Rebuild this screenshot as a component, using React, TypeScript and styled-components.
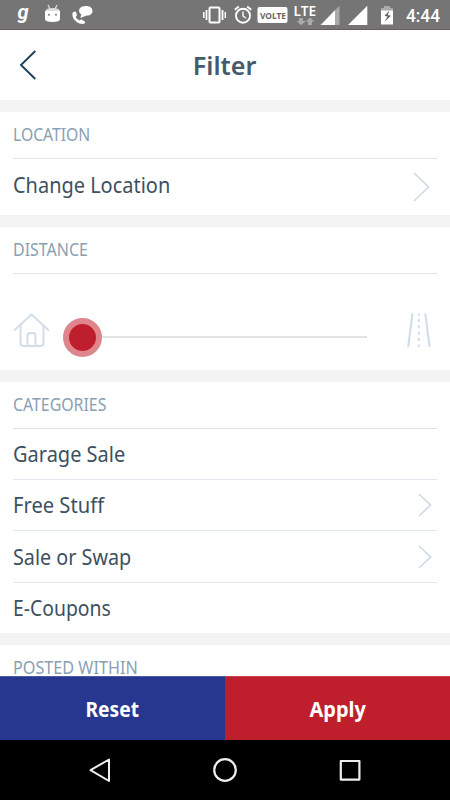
import styled, { createGlobalStyle } from 'styled-components'

const GlobalStyle = createGlobalStyle`
  * {
    box-sizing: border-box;
  }

  body {
    margin: 0;
    background: #fff;
    font-family: 'Noto Sans', sans-serif;
  }
`

const Screen = styled.div`
  display: flex;
  flex-direction: column;
  height: 800px;
  overflow: hidden;
  background: #f3f3f3;
`

const StatusBar = styled.div`
  flex: none;
  height: 30px;
  background: #757575;
  border-bottom: 1px solid #645f62;
`

const StatusIcons = styled.svg`
  display: block;
`

const Header = styled.header`
  flex: none;
  display: grid;
  grid-template-columns: 58px 1fr 58px;
  align-items: center;
  height: 70px;
  background: #fff;
`

const BackButton = styled.button`
  display: flex;
  padding: 0 0 0 19px;
  border: 0;
  background: none;
`

const Squeezed = styled.span<{ $scale: number; $center?: boolean }>`
  display: inline-block;
  white-space: nowrap;
  transform: scaleX(${({ $scale }) => $scale});
  transform-origin: ${({ $center }) => ($center ? 'center' : 'left')};
`

const Title = styled.h1`
  margin: 0;
  font-size: 25px;
  line-height: 70px;
  font-weight: 600;
  text-align: center;
  color: #455a6b;
`

const Content = styled.main`
  flex: 1;
  min-height: 0;
  display: flex;
  flex-direction: column;
  gap: 12px;
  padding-top: 12px;
`

const Section = styled.section`
  flex: none;
  padding: 0 13px;
  background: #fff;
`

const SectionTitle = styled.h2<{ $open?: boolean }>`
  height: ${({ $open }) => ($open ? 31 : 47)}px;
  margin: 0;
  padding-top: 14px;
  border-bottom: ${({ $open }) => ($open ? '0' : '1px solid #dce3ec')};
  font-size: 17.4px;
  line-height: 16px;
  font-weight: 400;
  color: #8a9fb3;
`

const Row = styled.div<{ $height: number; $last?: boolean; $lift?: number }>`
  display: flex;
  align-items: center;
  justify-content: space-between;
  height: ${({ $height }) => $height}px;
  border-bottom: ${({ $last }) => ($last ? '0' : '1px solid #dfe6ee')};
  font-size: 21px;
  color: #3d5060;

  > span {
    margin-bottom: ${({ $lift = 0 }) => $lift}px;
  }
`

const RowIcon = styled.div<{ $right: number }>`
  display: flex;
  padding-right: ${({ $right }) => $right}px;
`

const DistanceRow = styled.div`
  display: grid;
  grid-template-columns: 50px 1fr 70px;
  align-items: center;
  height: 96px;
  padding-top: 17px;
`

const Slider = styled.div`
  display: flex;
  align-items: center;
  height: 40px;
  margin-top: 14px;
`

const Thumb = styled.div`
  flex: none;
  width: 39px;
  height: 39px;
  border: 6px solid #de858e;
  border-radius: 50%;
  background: #bf1e2d;
`

const Track = styled.div`
  flex: 1;
  height: 2px;
  margin-bottom: 1px;
  background: #e3e3e3;
`

const RoadIcon = styled.svg`
  justify-self: end;
  margin-right: 6px;
`

const Actions = styled.div`
  flex: none;
  display: grid;
  grid-template-columns: 1fr 1fr;
  height: 64px;
`

const ActionButton = styled.button<{ $color: string; $edge: string }>`
  padding: 0;
  border: 0;
  border-top: 1px solid ${({ $edge }) => $edge};
  background: ${({ $color }) => $color};
  color: #fff;
  font-family: inherit;
  font-size: 21px;
  font-weight: 700;
`

const NavBar = styled.nav`
  flex: none;
  display: flex;
  align-items: center;
  justify-content: center;
  gap: 99px;
  height: 60px;
  background: #000;
`

const categories = [
  { name: 'Garage Sale', arrow: false, height: 51, scale: 0.952 },
  { name: 'Free Stuff', arrow: true, height: 51, scale: 0.96 },
  { name: 'Sale or Swap', arrow: true, height: 52, scale: 0.941 },
  { name: 'E-Coupons', arrow: false, height: 50, scale: 0.922 },
]

const Chevron = ({ width, height }: { width: number; height: number }) => (
  <svg width={width} height={height} fill='none' stroke='#cfdae4' strokeWidth='1.7'>
    <path d={`M1 1L${width - 1.5} ${height / 2}L1 ${height - 1}`} />
  </svg>
)

const Status = () => (
  <StatusBar>
    <StatusIcons width='450' height='29' fill='#fff'>
      <text x='17.5' y='19' fontFamily='Roboto' fontSize='20' fontWeight='700' fontStyle='italic'>g</text>

      <path d='M48 5l2 4M57 5l-2 4' stroke='#ddd' strokeWidth='1.3' />
      <path d='M45.5 11Q46 8 52.5 8T60 11z' fill='#ddd' />
      <path d='M45 11H60V19Q60 22 52.5 22T45 19z' />
      <circle cx='49' cy='14.7' r='1' fill='#757575' />
      <circle cx='56' cy='14.7' r='1' fill='#757575' />

      <path d='M73 12.2Q75.3 11 76 12.2L77 15Q76.8 16 75.5 17Q77 19.5 79.8 20.5Q81 19 82.2 19.7L85 21.8Q85.6 23.5 82.5 24Q76 23.4 73.2 18Q71.7 14 73 12.2z' />
      <path d='M85.8 6C90.5 6 92.5 8.3 92.5 11C92.5 14 90 15.7 86 15.7L80.3 18L81.3 14.5C77 11 79.2 6 85.8 6z' />

      <g fill='none' stroke='#fff' strokeWidth='2'>
        <rect x='209.5' y='7.5' width='10' height='15' rx='1' />
        <path d='M206.5 10v10M222.5 10v10' strokeWidth='1.8' />
        <path d='M203.8 12v6M225.3 12v6' strokeWidth='1.5' />
        <circle cx='243' cy='15.7' r='7' strokeWidth='1.9' />
        <path d='M243 11.5v4.5l3 2.2' strokeWidth='1.4' />
        <path d='M234.8 9.8l4-3.3M251.2 9.8l-4-3.3' />
      </g>

      <rect x='257.5' y='7' width='30' height='16' rx='2' />
      <text x='260' y='18.6' fontSize='9.5' fontWeight='700' fill='#666' textLength='26' lengthAdjust='spacingAndGlyphs'>VOLTE</text>
      <text x='293.5' y='15.7' fontSize='13.5' fontWeight='600' textLength='22.5' lengthAdjust='spacingAndGlyphs'>LTE</text>
      <path d='M299 18h4v3h3l-5 4.3-4.5-4.3h2.5zM308 25v-3.5h-2.5l4.7-4 4.3 4H312V25z' fill='#aaa' />

      <path d='M339.5 5.7V25H320z' fill='#aaa' />
      <path d='M335 10.2V25H321z' />
      <path d='M367.3 5.7V25H348z' />

      <path d='M381 8h3V6h6v2h3v3h-12z' fill='#aaa' />
      <path d='M381 10.5h12V24.5h-12z' />
      <path d='M389.5 10.5l-5 5.2 3 .8-3 5.2 6.5-6-3.2-.8z' fill='#666' />

      <text x='406' y='21.7' fontFamily='Roboto' fontSize='18' fontWeight='500' textLength='34' lengthAdjust='spacingAndGlyphs'>4:44</text>
    </StatusIcons>
  </StatusBar>
)

const App = () => {
  return (
    <Screen>
      <GlobalStyle />
      <Status />

      <Header>
        <BackButton aria-label='Back'>
          <svg width='18' height='30' fill='none' stroke='#1d405b' strokeWidth='1.9'>
            <path d='M16.3 1L2 15l14.3 14' />
          </svg>
        </BackButton>
        <Title>
          <Squeezed $scale={1.005} $center>Filter</Squeezed>
        </Title>
      </Header>

      <Content>
        <Section>
          <SectionTitle>
            <Squeezed $scale={0.903}>LOCATION</Squeezed>
          </SectionTitle>
          <Row $height={56} $last $lift={5}>
            <Squeezed $scale={0.95}>Change Location</Squeezed>
            <RowIcon $right={7}>
              <Chevron width={17} height={30} />
            </RowIcon>
          </Row>
        </Section>

        <Section>
          <SectionTitle>
            <Squeezed $scale={0.918}>DISTANCE</Squeezed>
          </SectionTitle>
          <DistanceRow>
            <svg width='36' height='35' fill='none' stroke='#d3dee9' strokeWidth='2' strokeLinejoin='round'>
              <path d='M1 17.5L18.5 1.5L36 17.5' />
              <path d='M7.5 12V30Q7.5 33 10.5 33H27.5Q30.5 33 30.5 30V12' />
              <path d='M14.5 33V22.5Q14.5 20 17 20H20Q22.5 20 22.5 22.5V33' />
            </svg>
            <Slider>
              <Thumb />
              <Track />
            </Slider>
            <RoadIcon width='24' height='35' fill='none' stroke='#d0dce7' strokeWidth='2'>
              <path d='M5.5 .5L1.2 34M18.3 .5L22.6 34' />
              <path d='M11.8 .5V34' strokeDasharray='3 3.4' strokeDashoffset='1' />
            </RoadIcon>
          </DistanceRow>
        </Section>

        <Section>
          <SectionTitle>
            <Squeezed $scale={0.912}>CATEGORIES</Squeezed>
          </SectionTitle>
          {categories.map(({ name, arrow, height, scale }, index) => (
            <Row key={name} $height={height} $last={index === categories.length - 1}>
              <Squeezed $scale={scale}>{name}</Squeezed>
              {arrow && (
                <RowIcon $right={5}>
                  <Chevron width={14} height={24} />
                </RowIcon>
              )}
            </Row>
          ))}
        </Section>

        <Section>
          <SectionTitle $open>
            <Squeezed $scale={0.931}>POSTED WITHIN</Squeezed>
          </SectionTitle>
        </Section>
      </Content>

      <Actions>
        <ActionButton $color='#27378f' $edge='#4d5aa2'>
          <Squeezed $scale={0.915} $center>Reset</Squeezed>
        </ActionButton>
        <ActionButton $color='#bf1e2d' $edge='#cb4652'>
          <Squeezed $scale={0.95} $center>Apply</Squeezed>
        </ActionButton>
      </Actions>

      <NavBar>
        <svg width='26' height='26' fill='none' stroke='#eee' strokeWidth='2' strokeLinejoin='round'>
          <path d='M22 2.5V24L3.5 13.2z' />
        </svg>
        <svg width='26' height='26' fill='none' stroke='#eee' strokeWidth='2.2'>
          <circle cx='13' cy='13' r='10.8' />
        </svg>
        <svg width='26' height='26' fill='none' stroke='#eee' strokeWidth='2.2' strokeLinejoin='round'>
          <rect x='3.8' y='4' width='18.6' height='18.6' />
        </svg>
      </NavBar>
    </Screen>
  )
}

export default App
